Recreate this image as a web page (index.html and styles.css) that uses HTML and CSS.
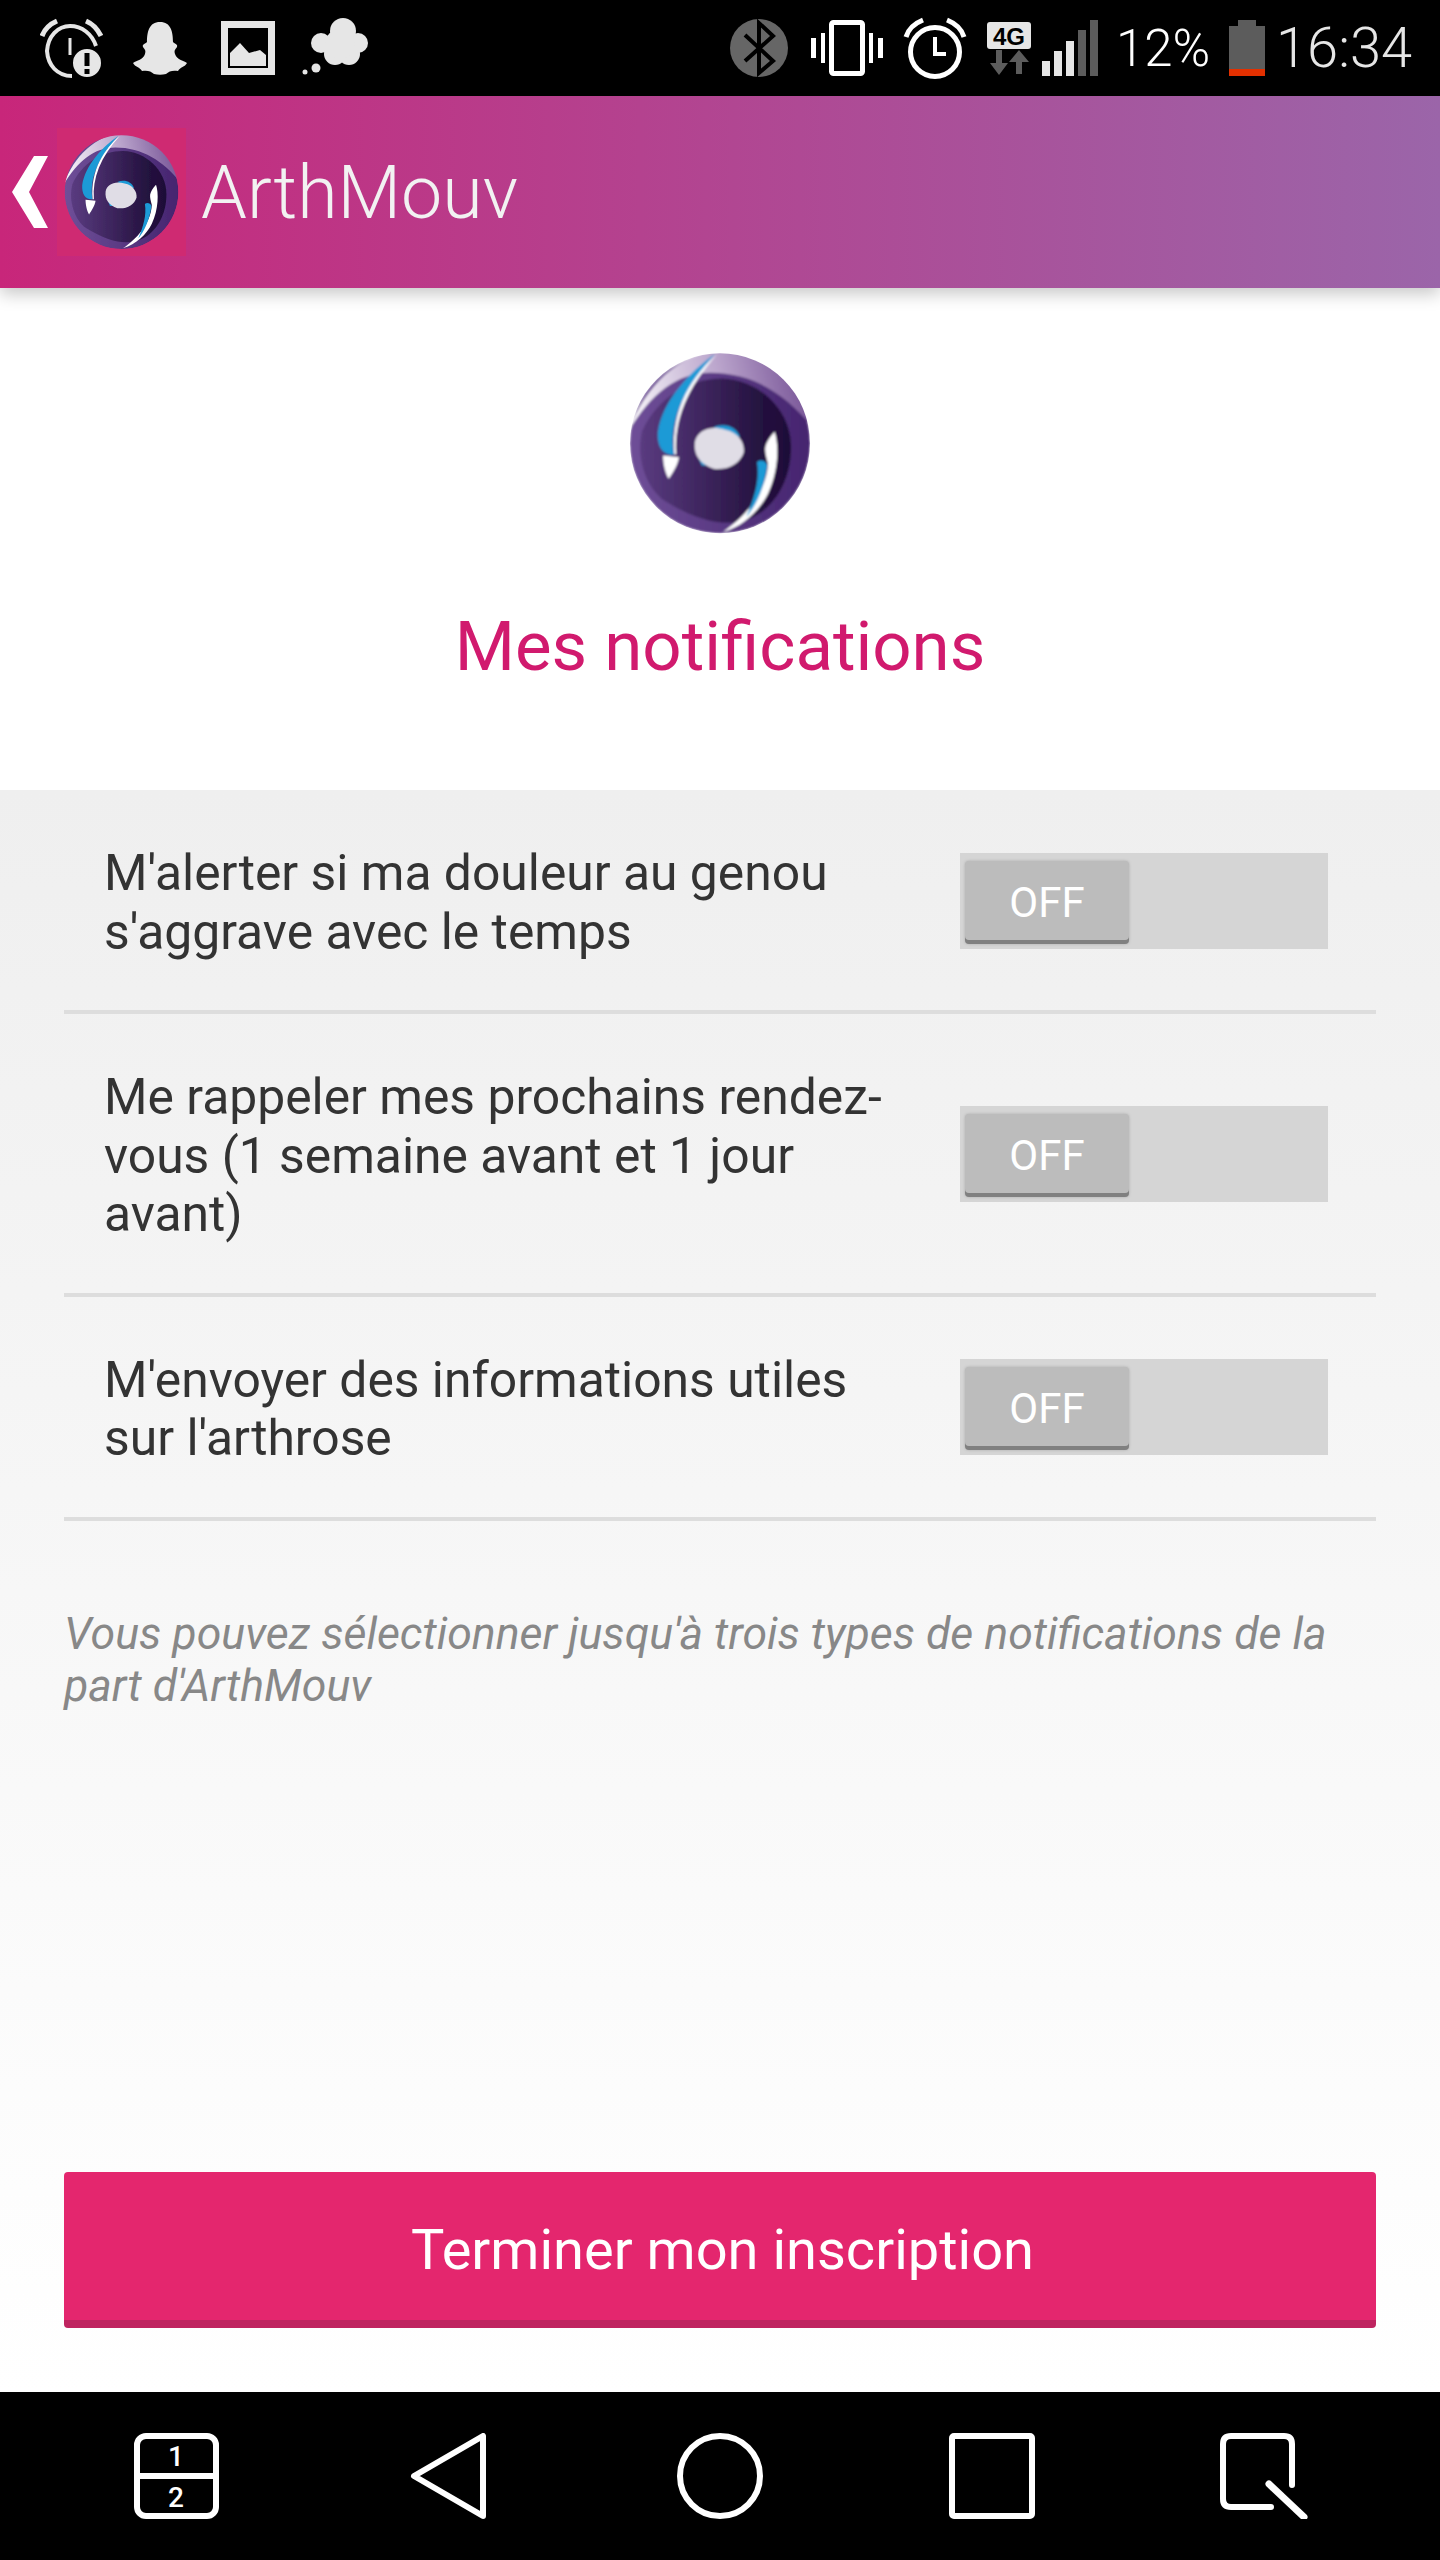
FILE: index.html
```html
<!DOCTYPE html>
<html lang="fr">
<head>
    <meta charset="UTF-8">
    <title>ArthMouv</title>
    <link rel="stylesheet" href="styles.css">
</head>
<body>
    <svg class="defs" width="0" height="0">
        <defs>
            <linearGradient id="rim" x1="0" y1="0" x2="1" y2="0">
                <stop offset="0" stop-color="#6f4f98"/>
                <stop offset="1" stop-color="#45246f"/>
            </linearGradient>
            <linearGradient id="top" x1="0" y1="0.3" x2="1" y2="0.2">
                <stop offset="0" stop-color="#f4f1f7"/>
                <stop offset="0.5" stop-color="#b9a3cb"/>
                <stop offset="1" stop-color="#6f4a90"/>
            </linearGradient>
            <linearGradient id="core" x1="0" y1="0" x2="1" y2="0">
                <stop offset="0" stop-color="#5a3b80"/>
                <stop offset="0.8" stop-color="#24123f"/>
                <stop offset="1" stop-color="#1e0e38"/>
            </linearGradient>
            <clipPath id="disc"><circle cx="360" cy="338" r="272"/></clipPath>
            <filter id="soft"><feGaussianBlur stdDeviation="2.5"/></filter>
            <symbol id="logo" viewBox="85 65 550 550">
                <g filter="url(#soft)" clip-path="url(#disc)">
                    <circle cx="360" cy="338" r="272" fill="url(#rim)"/>
                    <path d="M85 300C130 170 240 60 360 60C480 60 600 140 640 290C560 190 460 125 330 125C230 125 150 190 85 300Z" fill="url(#top)"/>
                    <path d="M125 300C170 200 270 140 370 142C470 145 575 230 575 350C575 470 500 580 380 578C330 577 270 560 190 510C135 470 105 380 125 300Z" fill="url(#core)"/>
                    <path d="M345 68C270 120 185 210 172 305C170 345 185 375 222 372C208 300 225 200 345 68Z" fill="#1d9ad6"/>
                    <path d="M352 68C280 130 210 230 222 372L228 372C220 270 260 170 352 68Z" fill="#fff"/>
                    <path d="M188 375L236 380C232 405 215 430 205 445C195 430 188 400 188 375Z" fill="#fff"/>
                    <path d="M340 290C370 275 410 285 420 320L350 295Z" fill="#1d9ad6"/>
                    <path d="M295 380L330 405L305 405Z" fill="#1d9ad6"/>
                    <path d="M284 335C290 300 330 282 375 297C415 305 435 335 432 365C420 400 385 420 340 415C300 400 280 375 284 335Z" fill="#e0dde6"/>
                    <path d="M525 303C538 340 538 420 505 490C480 540 430 590 368 606C430 565 500 490 505 400C500 380 495 365 497 350C500 335 510 320 525 303Z" fill="#fff"/>
                    <path d="M472 395C480 385 500 390 503 405C495 470 470 525 440 560C465 500 480 450 472 395Z" fill="#1d9ad6"/>
                </g>
            </symbol>
        </defs>
    </svg>

    <div class="statusbar">
        <div class="status-left">
            <svg class="st-alarm-info" width="63" height="96" fill="none" stroke="#e6e6e6" stroke-width="4">
                <path d="M2 36C5 28 10 24 17 21M46 21C53 24 58 30 61 36" stroke-width="5"/>
                <path d="M32 76C17 76 8 65 7 51C8 36 18 26 30 26C42 26 52 34 56 46"/>
                <path d="M30 38V55" stroke-width="3"/>
                <circle cx="47" cy="63" r="15" fill="#e6e6e6" stroke="#000" stroke-width="2"/>
                <path d="M47 53V66M47 69V74" stroke="#000" stroke-width="5"/>
            </svg>
            <svg class="st-ghost" width="54" height="96">
                <path d="M27 22C16 22 14 32 14 42C12 44 9 44 10 47C12 50 13 50 12 54C10 60 4 60 0 63C2 67 7 67 9 71C14 70 18 71 21 74C25 75 29 75 33 74C36 71 40 70 45 71C47 67 52 67 54 63C50 60 44 60 42 54C41 50 42 50 44 47C45 44 42 44 40 42C40 32 38 22 27 22Z" fill="#e6e6e6"/>
            </svg>
            <svg class="st-image" width="54" height="96">
                <rect x="3.5" y="24.5" width="47" height="47" fill="none" stroke="#e6e6e6" stroke-width="7"/>
                <path d="M9 66V53L19 43L28 53L39 50L45 55V66Z" fill="#e6e6e6"/>
            </svg>
            <svg class="st-cloud" width="68" height="96" fill="#e6e6e6">
                <circle cx="41" cy="31" r="13"/>
                <circle cx="19" cy="43" r="10"/>
                <circle cx="56" cy="43" r="10"/>
                <circle cx="33" cy="54" r="11"/>
                <circle cx="47" cy="54" r="11"/>
                <circle cx="38" cy="44" r="15"/>
                <circle cx="14" cy="68" r="4.5"/>
                <circle cx="3" cy="72" r="2.5"/>
            </svg>
        </div>
        <div class="status-right">
            <svg width="58" height="96">
                <circle cx="29" cy="48" r="29" fill="#666"/>
                <path d="M15 35L43 61L29 73V23L43 36L15 61" fill="none" stroke="#000" stroke-width="4"/>
            </svg>
            <svg class="st-vibrate" width="72" height="96" fill="#fff">
                <rect x="20.5" y="22.5" width="31" height="51" rx="2" fill="none" stroke="#fff" stroke-width="5"/>
                <rect x="0" y="38" width="5" height="20"/>
                <rect x="10" y="33" width="4" height="30"/>
                <rect x="58" y="33" width="4" height="30"/>
                <rect x="67" y="38" width="5" height="20"/>
            </svg>
            <svg class="st-alarm" width="64" height="96" fill="none" stroke="#fff" stroke-width="5">
                <circle cx="32" cy="52" r="24.5"/>
                <path d="M3 37C5 30 10 24 20 20M44 20C54 24 59 30 61 37" stroke-width="5"/>
                <path d="M32 37V54H43" stroke-width="4"/>
            </svg>
            <svg class="st-net" width="44" height="96">
                <rect x="0" y="22" width="44" height="27" rx="3" fill="#e6e6e6"/>
                <text x="22" y="45" class="net-label">4G</text>
                <path d="M9 50H15V63H21L12 75L3 63H9Z" fill="#5c5c5c"/>
                <path d="M32 50L42 62H35V74H29V62H22Z" fill="#5c5c5c"/>
            </svg>
            <svg class="st-signal" width="57" height="96">
                <rect x="0" y="61" width="8" height="15" fill="#e6e6e6"/>
                <rect x="12" y="51" width="8" height="25" fill="#e6e6e6"/>
                <rect x="24" y="41" width="8" height="35" fill="#e6e6e6"/>
                <rect x="36" y="30" width="8" height="46" fill="#5c5c5c"/>
                <rect x="48" y="20" width="8" height="56" fill="#5c5c5c"/>
            </svg>
            <span class="st-percent">12%</span>
            <svg class="st-battery" width="36" height="96">
                <rect x="9" y="20" width="18" height="7" fill="#5c5c5c"/>
                <rect x="0" y="26" width="36" height="43" fill="#5c5c5c"/>
                <rect x="0" y="69" width="36" height="7" fill="#e33000"/>
            </svg>
            <span class="st-time">16:34</span>
        </div>
    </div>

    <div class="header">
        <span class="back">
            <svg width="36" height="72">
                <path d="M36 0H22L0 36L22 72H36L17 36Z" fill="#fff"/>
            </svg>
        </span>
        <span class="header-logo"><svg width="115" height="115"><use href="#logo"/></svg></span>
        <span class="header-title">ArthMouv</span>
    </div>

    <div class="intro">
        <svg width="182" height="182"><use href="#logo"/></svg>
        <h1>Mes notifications</h1>
    </div>

    <div class="content">
        <ul class="options">
            <li>
                <p>M'alerter si ma douleur au genou s'aggrave avec le temps</p>
                <div class="toggle"><span>OFF</span></div>
            </li>
            <li>
                <p>Me rappeler mes prochains rendez-vous (1 semaine avant et 1 jour avant)</p>
                <div class="toggle"><span>OFF</span></div>
            </li>
            <li>
                <p>M'envoyer des informations utiles sur l'arthrose</p>
                <div class="toggle"><span>OFF</span></div>
            </li>
        </ul>
        <p class="note">Vous pouvez sélectionner jusqu'à trois types de notifications de la part d'ArthMouv</p>
        <button class="finish">Terminer mon inscription</button>
    </div>

    <div class="navbar">
        <svg width="85" height="86" fill="none" stroke="#fff" stroke-width="6">
            <rect x="3" y="3" width="79" height="80" rx="9"/>
            <path d="M3 43H82"/>
            <text x="42" y="33" class="nav-num">1</text>
            <text x="42" y="74" class="nav-num">2</text>
        </svg>
        <svg width="76" height="86" fill="none" stroke="#fff" stroke-width="6" stroke-linejoin="round">
            <path d="M73 3V83L4 43Z"/>
        </svg>
        <svg width="86" height="86" fill="none" stroke="#fff" stroke-width="6">
            <circle cx="43" cy="43" r="40"/>
        </svg>
        <svg width="86" height="86" fill="none" stroke="#fff" stroke-width="6">
            <rect x="3" y="3" width="80" height="80" rx="2"/>
        </svg>
        <svg width="89" height="86" fill="none" stroke="#fff" stroke-width="6" stroke-linecap="round">
            <path d="M51 74H11Q3 74 3 66V11Q3 3 11 3H64Q72 3 72 11V52"/>
            <path d="M49 51L84 84" stroke-width="7"/>
        </svg>
    </div>
</body>
</html>
```

FILE: styles.css
```css
*{margin:0;padding:0;box-sizing:border-box;}
html,body{
    width:1440px;
    height:2560px;
    overflow:hidden;
}
body{
    display:flex;
    flex-direction:column;
    font-family:Roboto,"Liberation Sans",sans-serif;
    background-color:#fff;
}
.defs{
    position:absolute;
}
svg{
    display:block;
    flex:none;
}

/* status bar */
.statusbar{
    height:96px;
    background-color:#000;
    display:flex;
    justify-content:space-between;
    padding:0 28px 0 40px;
}
.status-left,.status-right{
    display:flex;
    align-items:center;
}
.st-ghost{margin-left:30px;}
.st-image{margin-left:34px;}
.st-cloud{margin-left:27px;}
.st-vibrate{margin-left:23px;}
.st-alarm{margin-left:20px;}
.st-net{margin-left:20px;}
.st-signal{margin-left:11px;}
.st-percent{
    margin-left:17px;
    width:94px;
    font-size:51px;
    color:#fff;
    font-weight:300;
    white-space:nowrap;
}
.st-battery{margin-left:19px;}
.st-time{
    margin-left:11px;
    width:136px;
    font-size:56px;
    color:#e6e6e6;
    font-weight:300;
    white-space:nowrap;
}
.net-label{
    font-family:"Liberation Sans",sans-serif;
    font-size:24px;
    font-weight:bold;
    fill:#000;
    text-anchor:middle;
}

/* header */
.header{
    height:192px;
    display:flex;
    align-items:center;
    padding-left:12px;
    background:linear-gradient(to right,#c8267a,#9b65a9);
    box-shadow:0 6px 16px rgba(0,0,0,.22);
    position:relative;
}
.header-logo{
    width:129px;
    height:128px;
    margin-left:9px;
    background-color:#cf2a72;
    display:flex;
    align-items:center;
    justify-content:center;
}
.header-title{
    margin-left:15px;
    padding-top:2px;
    font-size:73.5px;
    font-weight:300;
    color:#f2f2f2;
}

/* top block */
.intro{
    height:502px;
    padding-top:65px;
    display:flex;
    flex-direction:column;
    align-items:center;
}
.intro h1{
    margin-top:71px;
    font-size:69px;
    font-weight:400;
    color:#d11a6e;
}

/* options */
.content{
    flex:1;
    display:flex;
    flex-direction:column;
    padding:0 64px 64px;
    background:linear-gradient(to bottom,#efefef,#fff);
}
.options{
    list-style:none;
}
.options li{
    display:flex;
    align-items:center;
    padding:50px 48px 49px 40px;
    border-bottom:4px solid #ddd;
}
.options p{
    width:801px;
    margin-right:55px;
    padding-top:4px;
    font-size:49.8px;
    line-height:58.5px;
    color:#333;
}
.toggle{
    width:368px;
    height:96px;
    flex:none;
    padding:8px 0 5px 5px;
    background-color:#d5d5d5;
}
.toggle span{
    display:flex;
    align-items:center;
    justify-content:center;
    width:164px;
    height:83px;
    border-radius:4px;
    box-shadow:inset 0 -4px 0 #808080,0 0 3px #aaa;
    background-color:#bcbcbc;
    color:#fff;
    font-size:42px;
}
.note{
    margin-top:87px;
    font-size:44.6px;
    line-height:52px;
    font-style:italic;
    color:#888;
}
.finish{
    margin-top:auto;
    height:156px;
    padding:8px 0 0 5px;
    border:none;
    border-bottom:8px solid #bf2460;
    border-radius:4px;
    background-color:#e4266e;
    color:#fff;
    font-family:inherit;
    font-size:56px;
}

/* nav bar */
.navbar{
    height:168px;
    background-color:#000;
    display:grid;
    grid-template-columns:repeat(5,272px);
    padding:0 40px;
    align-items:center;
    justify-items:center;
}
.nav-num{
    font-family:Roboto,sans-serif;
    font-size:28px;
    font-weight:500;
    fill:#fff;
    stroke:none;
    text-anchor:middle;
}
```
